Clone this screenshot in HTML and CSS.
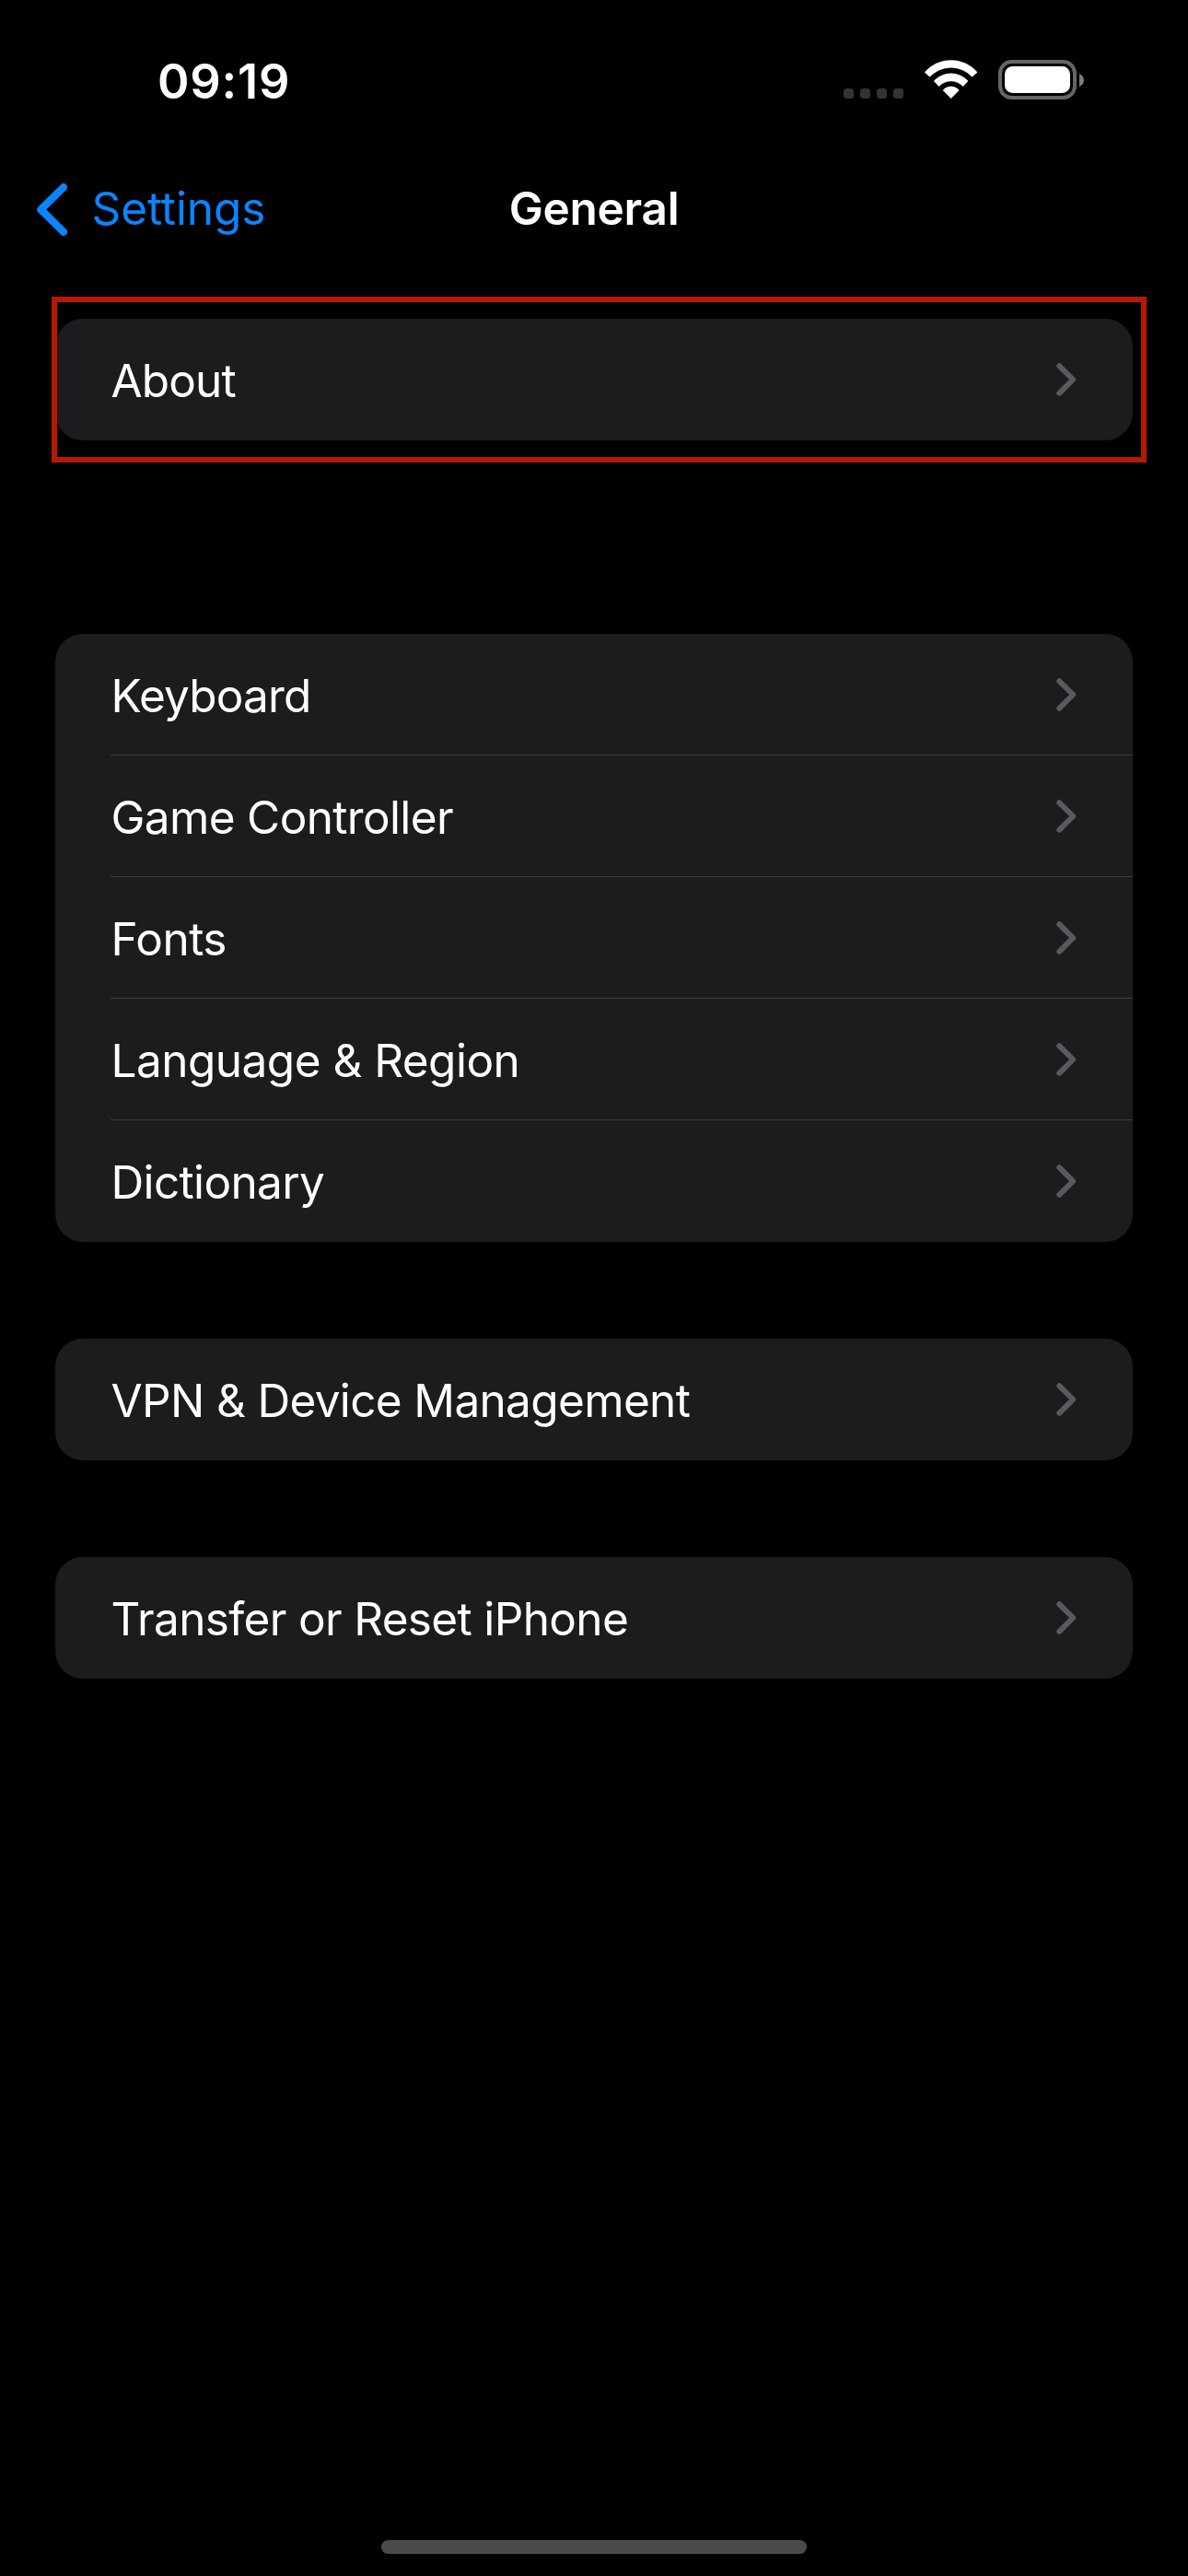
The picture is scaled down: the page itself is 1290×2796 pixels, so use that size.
FILE: index.html
```
<!DOCTYPE html>
<html lang="en">
<head>
<meta charset="utf-8">
<title>General</title>
<link rel="stylesheet" href="styles.css">
</head>
<body>
<svg class="defs" width="0" height="0" aria-hidden="true">
  <symbol id="chevron" viewBox="0 0 22 36">
    <path d="M3.2 3.2 18.2 18 3.2 32.8" fill="none" stroke="currentColor" stroke-width="5.9" stroke-linecap="round" stroke-linejoin="round"/>
  </symbol>
</svg>
<div class="screen">
  <header class="status">
    <time class="clock">09:19</time>
    <div class="indicators">
      <div class="signal"><i class="dot"></i><i class="dot"></i><i class="dot"></i><i class="dot"></i></div>
      <svg class="wifi" viewBox="371 75 172 126" aria-label="Wi-Fi">
        <g fill="#fff" stroke="#fff" stroke-width="1.5" stroke-linejoin="round">
          <path d="M371.5 115.5A112.5 112.5 0 0 1 542.5 115.5L526 130A94 94 0 0 0 388 130Z"/>
          <path d="M401.5 144A75 75 0 0 1 512.5 144L496 161A53 53 0 0 0 418 161Z"/>
          <path d="M431 174A34 34 0 0 1 483 174L457 200.5Z"/>
        </g>
      </svg>
      <div class="battery">
        <div class="battery-body"><div class="battery-level"></div></div>
        <svg class="battery-cap" viewBox="0 0 5 14"><path d="M0 0C6.7 2.6 6.7 11.4 0 14Z" fill="#7a7a7a"/></svg>
      </div>
    </div>
  </header>
  <nav class="navbar">
    <a class="back">
      <svg class="back-icon" viewBox="0 0 33 57"><path d="M28.9 4.3 4.4 28.5 28.9 52.7" fill="none" stroke="currentColor" stroke-width="8.2" stroke-linecap="round" stroke-linejoin="round"/></svg>
      <span class="back-label">Settings</span>
    </a>
    <h1 class="title">General</h1>
  </nav>
  <main class="groups">
    <section class="group group-about">
      <a class="row"><span class="label label-tight">About</span><svg class="chevron"><use href="#chevron"/></svg></a>
      <div class="highlight"></div>
    </section>
    <section class="group">
      <a class="row"><span class="label label-tight">Keyboard</span><svg class="chevron"><use href="#chevron"/></svg></a>
      <a class="row"><span class="label">Game Controller</span><svg class="chevron"><use href="#chevron"/></svg></a>
      <a class="row"><span class="label label-loose">Fonts</span><svg class="chevron"><use href="#chevron"/></svg></a>
      <a class="row"><span class="label label-loose">Language &amp; Region</span><svg class="chevron"><use href="#chevron"/></svg></a>
      <a class="row"><span class="label">Dictionary</span><svg class="chevron"><use href="#chevron"/></svg></a>
    </section>
    <section class="group">
      <a class="row"><span class="label">VPN &amp; Device Management</span><svg class="chevron"><use href="#chevron"/></svg></a>
    </section>
    <section class="group">
      <a class="row"><span class="label">Transfer or Reset iPhone</span><svg class="chevron"><use href="#chevron"/></svg></a>
    </section>
  </main>
  <div class="home-indicator"></div>
</div>
</body>
</html>
```
FILE: styles.css
```
* { box-sizing: border-box; }

body {
  margin: 0;
  background: #000;
  color: #fff;
  font-family: Inter, "Liberation Sans", sans-serif;
  font-size: 49.5px;
}

.defs { display: block; }

.screen {
  display: flex;
  flex-direction: column;
  width: 1290px;
  height: 2796px;
  background: #000;
  overflow: hidden;
}

/* Status bar */
.status {
  display: flex;
  justify-content: space-between;
  height: 177px;
  padding: 0 113px 0 171px;
}
.clock {
  font-size: 52.3px;
  font-weight: 600;
  line-height: 177px;
  letter-spacing: 0.8px;
}
.indicators {
  display: flex;
  align-items: flex-start;
  padding-top: 65px;
}
.signal {
  display: flex;
  gap: 7px;
  margin: 31px 22.7px 0 0;
}
.dot {
  width: 11px;
  height: 11px;
  border-radius: 3.5px;
  background: #333;
}
.wifi {
  width: 57.3px;
  height: 42px;
  margin-right: 23px;
  overflow: visible;
}
.battery {
  display: flex;
  align-items: center;
  gap: 3px;
}
.battery-body {
  width: 85px;
  height: 43px;
  padding: 3px;
  border: 4px solid #666;
  border-radius: 14.5px;
}
.battery-level {
  height: 29px;
  border-radius: 8.5px;
  background: #fff;
}
.battery-cap {
  width: 5px;
  height: 14px;
}

/* Navigation bar */
.navbar {
  display: grid;
  grid-template-columns: 1fr auto 1fr;
  align-items: center;
  height: 100px;
  padding: 0 40px;
}
.back {
  display: flex;
  align-items: center;
  gap: 26.5px;
  color: #0a84ff;
}
.back-icon {
  width: 33px;
  height: 57px;
}
.back-label {
  padding-bottom: 2px;
  line-height: 98px;
  letter-spacing: -0.1px;
}
.title {
  margin: 0;
  padding-bottom: 2px;
  font-size: 49.5px;
  font-weight: 600;
  line-height: 98px;
  letter-spacing: -0.25px;
}

/* Grouped lists */
.groups {
  display: flex;
  flex-direction: column;
  gap: 105px;
  flex: 1;
  padding: 69px 60px 0;
}
.group {
  border-radius: 30px;
  background: #1c1c1e;
}
.group-about {
  position: relative;
  margin-bottom: 105px;
}
.row {
  display: flex;
  align-items: center;
  justify-content: space-between;
  height: 132px;
  margin-left: 60px;
  padding-right: 61px;
}
.row:not(:last-of-type) { box-shadow: inset 0 -1px #3d3d41; }
.label {
  padding: 1px 0 0 0.5px;
  letter-spacing: -0.65px;
  white-space: nowrap;
}
.label-tight { letter-spacing: -0.85px; }
.label-loose { letter-spacing: -0.52px; }
.chevron {
  width: 22px;
  height: 36px;
  color: #5a5a5e;
}
.highlight {
  position: absolute;
  top: -24px;
  left: -4px;
  width: 1189px;
  height: 180px;
  border: 6px solid #b51a00;
}

.home-indicator {
  align-self: center;
  width: 462px;
  height: 15px;
  margin-bottom: 24px;
  border-radius: 7.5px;
  background: #4b4b4b;
}
```
